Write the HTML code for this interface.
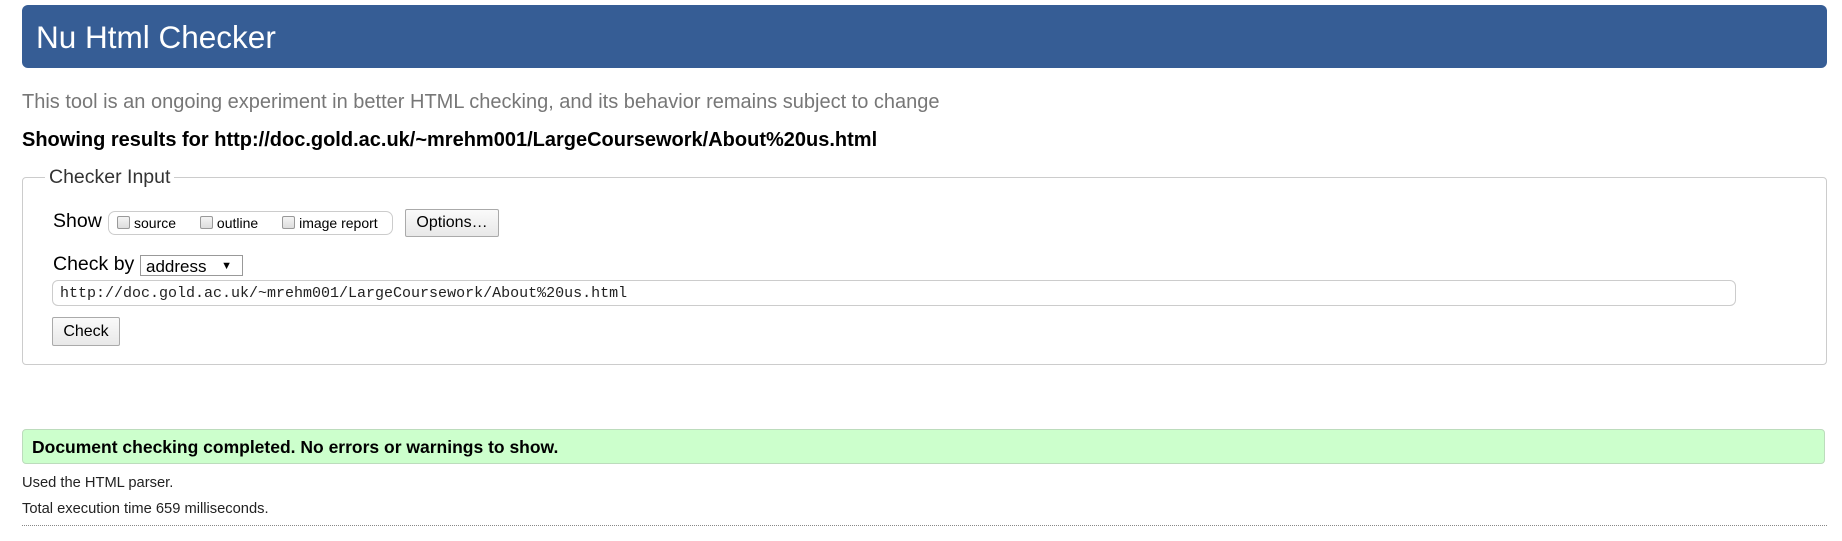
<!DOCTYPE html>
<html><head><style>
body{margin:0;width:1842px;height:541px;background:#fff;font-family:"Liberation Sans",Arial,sans-serif;color:#000;position:relative;overflow:hidden}
.a{position:absolute;white-space:nowrap}
#hdr{left:22px;top:5px;width:1805px;height:63px;background:#365d95;border-radius:6px}
#hdr span{position:absolute;left:14px;top:14px;font-size:31.5px;color:#fff}
#fs{left:22px;top:177px;width:1803px;height:186px;border:1px solid #ccc;border-radius:4px}
.btn{border:1px solid #aaa;background:linear-gradient(#fafafa,#e8e8e8);border-radius:2px;font-size:16px;text-align:center}
.cb{display:inline-block;width:11px;height:11px;border:1px solid #999;border-radius:2px;background:linear-gradient(#f4f4f4,#ddd);vertical-align:-1px;margin:0 4px 0 8px}
</style></head><body>
<div class="a" id="hdr"><span>Nu Html Checker</span></div>
<div class="a" style="left:22px;top:91px;font-size:20px;color:#777">This tool is an ongoing experiment in better HTML checking, and its behavior remains subject to change</div>
<div class="a" style="left:22px;top:129px;font-size:20px;font-weight:bold">Showing results for http://doc.gold.ac.uk/~mrehm001/LargeCoursework/About%20us.html</div>
<div class="a" id="fs"></div>
<div class="a" style="left:45px;top:166px;padding:0 4px;background:#fff;font-size:19.5px;color:#333">Checker Input</div>
<div class="a" style="left:53px;top:210px;font-size:19.5px">Show</div>
<div class="a" style="left:108px;top:211px;width:283px;height:22px;border:1px solid #ccc;border-radius:7px;font-size:14px;line-height:22px"><span class="cb"></span>source <span class="cb" style="margin-left:20px"></span>outline <span class="cb" style="margin-left:20px"></span>image report</div>
<div class="a btn" style="left:405px;top:209px;width:92px;height:26px;line-height:26px">Options…</div>
<div class="a" style="left:53px;top:253px;font-size:19.5px">Check by</div>
<div class="a" style="left:140px;top:255px;width:103px;height:21px;border:1px solid #999;font-size:17px;line-height:21px;padding-left:5px;box-sizing:border-box">address<span style="position:absolute;right:10px;font-size:11px">▼</span></div>
<div class="a" style="left:52px;top:280px;width:1684px;height:26px;border:1px solid #ccc;border-radius:6px;font-family:'Liberation Mono',monospace;font-size:15px;line-height:26px;padding-left:7px;box-sizing:border-box;color:#222">http://doc.gold.ac.uk/~mrehm001/LargeCoursework/About%20us.html</div>
<div class="a btn" style="left:52px;top:317px;width:66px;height:27px;line-height:27px">Check</div>
<div class="a" style="left:22px;top:429px;width:1803px;height:35px;background:#ccffcc;border:1px solid #bcdcbc;border-radius:4px;font-size:17.5px;font-weight:bold;line-height:35px;padding-left:9px;box-sizing:border-box">Document checking completed. No errors or warnings to show.</div>
<div class="a" style="left:22px;top:475px;font-size:14.7px;color:#222">Used the HTML parser.</div>
<div class="a" style="left:22px;top:501px;font-size:14.7px;color:#222">Total execution time 659 milliseconds.</div>
<div class="a" style="left:22px;top:525px;width:1805px;border-top:1px dotted #888"></div>
</body></html>
